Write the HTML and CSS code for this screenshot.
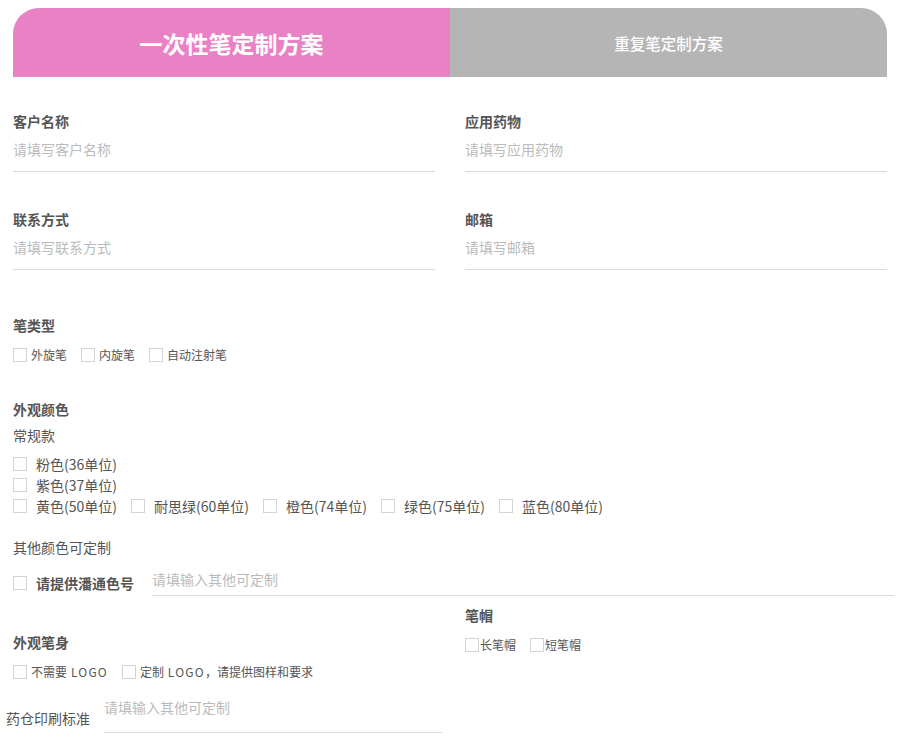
FILE: index.html
```html
<!DOCTYPE html>
<html lang="zh-CN">
<head>
    <meta charset="UTF-8">
    <meta name="viewport" content="width=device-width, initial-scale=1.0">
    <title>笔定制方案</title>
    <link rel="stylesheet" href="styles.css">
</head>
<body>
    <div class="tabs">
        <div class="tab tab-active">一次性笔定制方案</div>
        <div class="tab tab-other">重复笔定制方案</div>
    </div>

    <div class="form">
        <div class="fields">
            <div class="field">
                <label class="label">客户名称</label>
                <input class="line-input" type="text" placeholder="请填写客户名称">
            </div>
            <div class="field">
                <label class="label">应用药物</label>
                <input class="line-input" type="text" placeholder="请填写应用药物">
            </div>
            <div class="field">
                <label class="label">联系方式</label>
                <input class="line-input" type="text" placeholder="请填写联系方式">
            </div>
            <div class="field">
                <label class="label">邮箱</label>
                <input class="line-input" type="text" placeholder="请填写邮箱">
            </div>
        </div>

        <div class="section pen-type">
            <div class="label">笔类型</div>
            <div class="checks small">
                <label class="check"><span class="box"></span>外旋笔</label>
                <label class="check"><span class="box"></span>内旋笔</label>
                <label class="check"><span class="box"></span>自动注射笔</label>
            </div>
        </div>

        <div class="section colors">
            <div class="label">外观颜色</div>
            <div class="sub">常规款</div>
            <div class="color-list">
                <div class="checks wide">
                    <label class="check"><span class="box"></span>粉色(36单位)</label>
                </div>
                <div class="checks wide">
                    <label class="check"><span class="box"></span>紫色(37单位)</label>
                </div>
                <div class="checks wide">
                    <label class="check"><span class="box"></span>黄色(50单位)</label>
                    <label class="check"><span class="box"></span>耐思绿(60单位)</label>
                    <label class="check"><span class="box"></span>橙色(74单位)</label>
                    <label class="check"><span class="box"></span>绿色(75单位)</label>
                    <label class="check"><span class="box"></span>蓝色(80单位)</label>
                </div>
            </div>
            <div class="sub other">其他颜色可定制</div>
            <div class="pantone">
                <label class="check wide"><span class="box"></span><b>请提供潘通色号</b></label>
                <input class="line-input short" type="text" placeholder="请填输入其他可定制">
            </div>
        </div>

        <div class="bottom">
            <div class="col-left">
                <div class="label">外观笔身</div>
                <div class="checks small">
                    <label class="check"><span class="box"></span><span>不需要<span class="en"> LOGO</span></span></label>
                    <label class="check"><span class="box"></span><span>定制<span class="en"> LOGO</span>，请提供图样和要求</span></label>
                </div>
                <div class="print-row">
                    <span class="print-label">药仓印刷标准</span>
                    <input class="line-input print" type="text" placeholder="请填输入其他可定制">
                </div>
            </div>
            <div class="col-right">
                <div class="label">笔帽</div>
                <div class="checks small tight">
                    <label class="check"><span class="box"></span>长笔帽</label>
                    <label class="check"><span class="box"></span>短笔帽</label>
                </div>
            </div>
        </div>
    </div>
</body>
</html>
```

FILE: styles.css
```css
/* 基础 */
body {
    margin: 0;
    padding: 0;
    font-family: "Noto Sans CJK SC", "Noto Sans", sans-serif;
    color: #555;
    background: #fff;
}

/* 顶部标签 */
.tabs {
    display: flex;
    margin: 8px 14px 0 13px;
    height: 69px;
}

.tab {
    flex: 1;
    display: flex;
    align-items: center;
    justify-content: center;
    color: #fff;
}

.tab-active {
    background: #e982c4;
    border-top-left-radius: 26px;
    font-size: 23px;
    font-weight: bold;
}

.tab-other {
    background: #b5b5b5;
    border-top-right-radius: 26px;
    font-size: 15.5px;
    font-weight: 500;
}

/* 表单 */
.form {
    padding: 0 14px 0 13px;
}

.fields {
    display: grid;
    grid-template-columns: minmax(0, 1fr) minmax(0, 1fr);
    column-gap: 30px;
    row-gap: 37px;
    margin-top: 34px;
}

.field {
    display: flex;
    flex-direction: column;
}

.label {
    font-size: 14px;
    font-weight: bold;
    line-height: 20px;
    color: #555;
}

.line-input {
    border: none;
    border-bottom: 1px solid #dadada;
    outline: none;
    font-family: inherit;
    font-size: 14px;
    line-height: 24px;
    padding: 6px 0 10px;
    color: #555;
    background: transparent;
}

.line-input::placeholder {
    color: #bbb;
}

/* 复选框 */
.checks {
    display: flex;
    gap: 14px;
}

.check {
    display: flex;
    align-items: center;
    gap: 4px;
    line-height: 20px;
    white-space: nowrap;
}

.box {
    display: inline-block;
    width: 12px;
    height: 12px;
    border: 1px solid #d4d4d4;
    background: #fff;
}

.small .check {
    font-size: 12px;
    color: #555;
}

.en {
    letter-spacing: 1.2px;
}

.wide .check, .check.wide {
    font-size: 14px;
    gap: 9px;
    color: #555;
}

.tight .check {
    gap: 1px;
}

.section.pen-type {
    margin-top: 45px;
}

.pen-type .checks {
    margin-top: 10px;
}

.section.colors {
    margin-top: 34px;
}

.sub {
    font-size: 14px;
    line-height: 20px;
    margin-top: 6px;
}

.color-list {
    margin-top: 9px;
    display: flex;
    flex-direction: column;
    gap: 1px;
}

.sub.other {
    margin-top: 21px;
}

.pantone {
    display: flex;
    align-items: center;
    margin-top: 12px;
    margin-right: -7px;
}

.pantone b {
    font-weight: 600;
}

.pantone .check {
    margin-right: 18px;
}

.line-input.short {
    flex: 1;
    padding: 0 0 6px;
    line-height: 20px;
}

/* 底部两栏 */
.bottom {
    display: grid;
    grid-template-columns: minmax(0, 1fr) minmax(0, 1fr);
    column-gap: 30px;
    margin-top: 9px;
}

.col-left {
    padding-top: 27px;
}

.col-left .checks {
    margin-top: 10px;
}

.col-right .checks {
    margin-top: 10px;
}

.print-row {
    display: flex;
    align-items: flex-end;
    gap: 14px;
    margin: 13px 0 0 -7px;
    width: 436px;
}

.print-label {
    font-size: 14px;
    line-height: 20px;
    padding-bottom: 5px;
    color: #555;
}

.line-input.print {
    flex: 1;
    padding: 0 0 13px;
}
```
